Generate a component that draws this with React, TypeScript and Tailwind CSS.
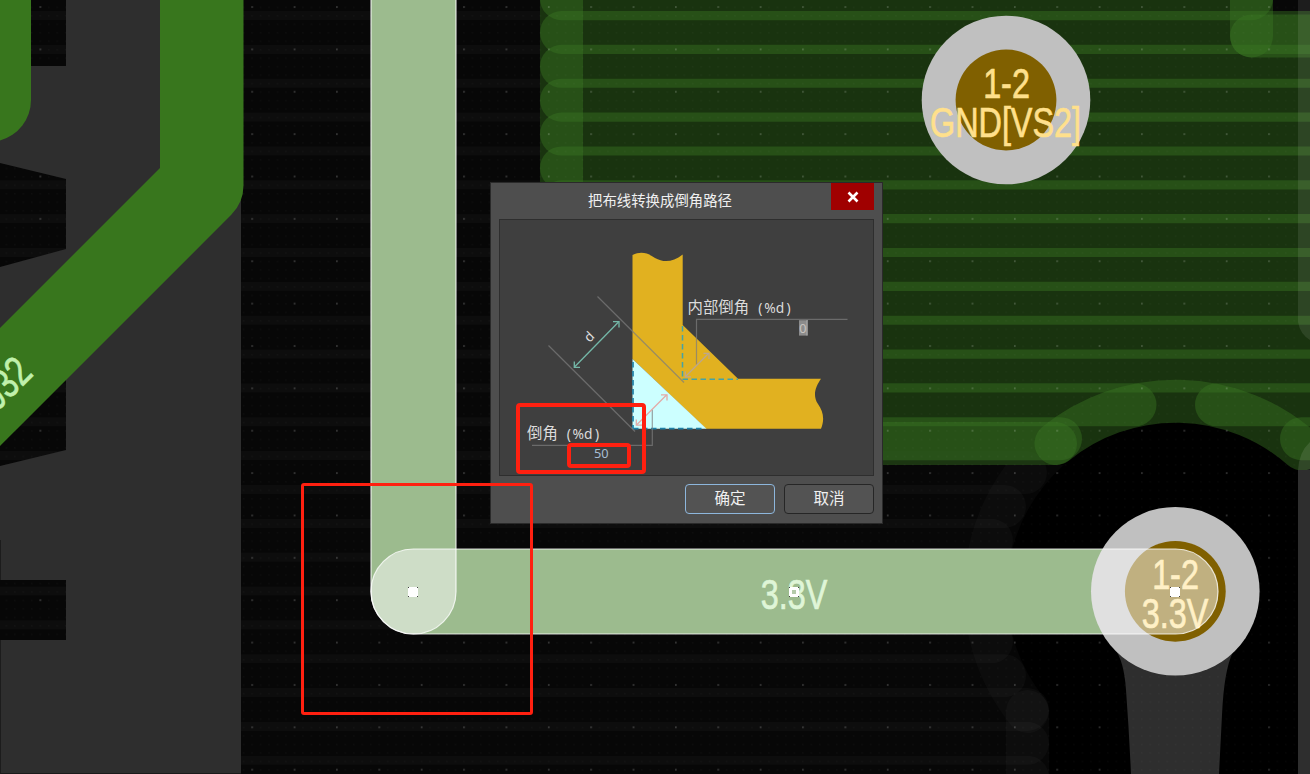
import React from 'react';

const PITCH = 33.85;
const rowTop = (k: number) => 11 + PITCH * k;

const COPPER = '#3b7623';

/* Filled pour rows: each row is a rounded 43px sweep overlapping the next one. */
const greenRows: { k: number; from: number; to: number }[] = [
  { k: -1, from: 540, to: 1273 },
  ...Array.from({ length: 11 }, (_, k) => ({ k, from: 540, to: 1340 })),
  { k: 11, from: 540, to: 1156.5 },
  { k: 11, from: 1195, to: 1340 },
  { k: 12, from: 540, to: 1082 },
  { k: 12, from: 1280, to: 1340 },
];

const darkEnds = [1047, 1026, 1013, 1009, 1009, 1013, 1026, 1049, 1049, 1049];

function PadText({ x, y, fill, children }: { x: number; y: number; fill: string; children: string }) {
  return (
    <text
      transform={`translate(${x} ${y}) scale(0.765 1)`}
      textAnchor="middle"
      fontSize="42.3"
      fill={fill}
      stroke={fill}
      strokeWidth="0.7"
    >
      {children}
    </text>
  );
}

function Handle({ x, y, hollow = false }: { x: number; y: number; hollow?: boolean }) {
  return (
    <g shapeRendering="crispEdges">
      <rect x={x - 5} y={y - 5} width="10" height="10" fill="#444" />
      <rect x={x - 4} y={y - 5} width="8" height="10" fill="#fff" />
      <rect x={x - 5} y={y - 4} width="10" height="8" fill="#fff" />
      {hollow && <rect x={x - 2} y={y - 2} width="4" height="4" fill="#b4cbaa" />}
    </g>
  );
}

function Board() {
  return (
    <svg
      className="block h-full w-full"
      viewBox="0 0 1310 774"
      fontFamily="'Liberation Sans', Arial, sans-serif"
    >
      <defs>
        <pattern id="minor" x="-2.9" y="-1.9" width="8.473" height="8.473" patternUnits="userSpaceOnUse">
          <rect x="0.3" y="0.3" width="1" height="1" fill="#fff" opacity="0.06" />
        </pattern>
        <pattern id="major" x="-2.9" y="6" width="42.37" height="42.37" patternUnits="userSpaceOnUse">
          <rect x="0" y="0.2" width="1.7" height="1.6" fill="#fff" opacity="0.2" />
        </pattern>
        <clipPath id="belowPour">
          <rect x="0" y="465" width="1175" height="309" />
        </clipPath>
      </defs>

      <rect width="1310" height="774" fill="#000" />

      {/* unrouted pour */}
      <g fill="#fff" fillOpacity="0.028">
        {Array.from({ length: 14 }, (_, i) => (
          <rect key={i} x="-30" y={rowTop(i - 1)} width="570" height="43" />
        ))}
        {darkEnds.map((end, i) => (
          <rect key={i} x="-30" y={rowTop(i + 13)} width={end + 30} height="43" rx="21.5" />
        ))}
        <rect x="1006" y="690" width="43" height="120" rx="21.5" />
        <rect x="1273" y="0" width="40" height="15" />
      </g>
      <path
        d="M1056 443.5 A191 191 0 0 0 1027.5 711.5"
        fill="none"
        stroke="#fff"
        strokeOpacity="0.025"
        strokeWidth="43"
        strokeLinecap="round"
        clipPath="url(#belowPour)"
      />

      {/* ground pour */}
      <g fill={COPPER} fillOpacity="0.43">
        {greenRows.map((r, i) => (
          <rect key={i} x={r.from} y={rowTop(r.k)} width={r.to - r.from} height="43" rx="21.5" />
        ))}
        <rect x="540" y="-30" width="43" height="495" />
        <rect x="583" y="422" width="494" height="43" rx="21.5" />
        <rect x="1230" y="-30" width="43" height="87.5" rx="21.5" />
        <rect x="1230" y="14.5" width="120" height="43" rx="21.5" />
      </g>
      <path
        d="M1056 443.5 A190.5 190.5 0 0 1 1302 449"
        fill="none"
        stroke={COPPER}
        strokeOpacity="0.43"
        strokeWidth="43"
        strokeLinecap="round"
      />

      {/* dark layer */}
      <path d="M1298 0 H1310 V340 Q1300 334 1298 322 Z" fill="#fff" fillOpacity="0.09" />
      <path d="M1298 470 Q1299 452 1310 442 V470 Z" fill="#fff" fillOpacity="0.1" />
      <rect x="1298" y="470" width="12" height="304" fill="#2e2e2e" />
      <path d="M1114 648 Q1124 660 1126 690 Q1129 730 1131 774 H1219 L1222 715 Q1224 670 1233 652 Z" fill="#2e2e2e" />
      <path
        fillRule="evenodd"
        fill="#2e2e2e"
        d="M0 0 H241 V774 H0 Z M31 0 V66 H66 V0 Z M0 163 L66 179 V249 L0 267 Z M0 370 H66 V450 L0 466 Z M0 580 H66 V640 H0 Z"
      />
      <path d="M0.5 540 V580 M0.5 640 V774" stroke="#1c1c1c" strokeWidth="1" />
      <path d="M0 773.5 H241" stroke="#1a1a1a" />

      {/* grid dots */}
      <path
        fill="url(#minor)"
        d="M241 0 H1298 V774 H241 Z M31 0 H66 V66 H31 Z M0 163 L66 179 V249 L0 267 Z M0 370 H66 V450 L0 466 Z M0 580 H66 V640 H0 Z"
      />
      <path
        fill="url(#major)"
        d="M241 0 H1125 V774 H241 Z M1125 0 H1298 V640 H1125 Z M1228 640 H1298 V774 H1228 Z M31 0 H66 V66 H31 Z M0 163 L66 179 V249 L0 267 Z M0 370 H66 V450 L0 466 Z M0 580 H66 V640 H0 Z"
      />

      {/* neighbouring traces */}
      <path
        d="M201.75 -50 V185.3 L-100 487"
        fill="none"
        stroke="#38761d"
        strokeWidth="83.5"
        strokeLinejoin="round"
      />
      <path d="M0 0 H31 V100 A42 42 0 0 1 0 140.5 Z" fill="#38761d" />
      <text
        transform="translate(34.5 374.5) rotate(-45) scale(0.765 1)"
        textAnchor="end"
        fontSize="42.3"
        fill="#c0f0ac"
        stroke="#c0f0ac"
        strokeWidth="0.7"
      >
        032
      </text>

      {/* 3.3V trace */}
      <path d="M413.5 -60 V591.5 H1175" fill="none" stroke="#38761d" strokeWidth="85" strokeLinejoin="round" />

      {/* vias */}
      <circle cx="1006" cy="100" r="84.3" fill="#c0c0c0" />
      <circle cx="1006" cy="100" r="50.4" fill="#806000" />
      <PadText x={1006.5} y={98} fill="#ffe08c">1-2</PadText>
      <PadText x={1005.5} y={136.5} fill="#ffe08c">GND[VS2]</PadText>

      <circle cx="1175.3" cy="591.3" r="84.3" fill="#c0c0c0" />
      <circle cx="1175.3" cy="591.3" r="50.4" fill="#806000" />
      <PadText x={1175.5} y={589.3} fill="#ffe08c">1-2</PadText>
      <PadText x={1175} y={627.5} fill="#ffe08c">3.3V</PadText>
      <PadText x={794} y={608.7} fill="#bfeaae">3.3V</PadText>

      {/* selection */}
      <g fill="#fff" fillOpacity="0.5" stroke="#fff" strokeOpacity="0.8" strokeWidth="1.2">
        <rect x="371" y="-60" width="85" height="694" rx="42.5" />
        <rect x="371" y="549" width="847" height="85" rx="42.5" />
      </g>
      <Handle x={413} y={592} />
      <Handle x={794} y={592} hollow />
      <Handle x={1175} y={592} />
    </svg>
  );
}

function ChamferDiagram() {
  return (
    <svg
      className="block h-full w-full"
      viewBox="500 220 373 255"
      fontFamily="'Noto Sans', 'Noto Sans CJK SC', sans-serif"
      fill="none"
    >
      <path
        d="M632.5 255 C641 251 648 253 655 258 C664 263 673 262 682.7 254.5 V325 L738 378.7 H821 C816 386 812 395 818 404 C823 411 825 419 821 428.7 H706 L632.5 359 Z"
        fill="#e1b120"
      />
      <path d="M632.5 359 V428.7 H706.5 Z" fill="#ccffff" />
      <g stroke="#1f80a6" strokeWidth="1.7" strokeDasharray="5.5 3.5">
        <path d="M633 362 V428.5" />
        <path d="M633 428.7 H705" />
      </g>
      <g stroke="#44a3a6" strokeWidth="1.5" strokeDasharray="5.5 3.5">
        <path d="M682.5 326 V379" />
        <path d="M682.5 379.3 H738" />
      </g>
      <g stroke="#7d7d7d" strokeOpacity="0.72" strokeWidth="1.2">
        <path d="M597.5 296.5 L684 382.5" />
        <path d="M548.5 345.5 L635 431.5" />
        <path d="M847.5 319.3 H696.5 V364.5" />
        <path d="M532 445.3 H652.3 V409.5" />
      </g>
      <g stroke="#74b8a8" strokeWidth="1.3">
        <path d="M574.5 367 L618.5 322" />
        <path d="M613 321.7 H619 V327.5 M574.3 361.5 V367.3 H580" />
      </g>
      <g stroke="#bca68f" strokeWidth="1.2">
        <path d="M685.5 376.5 L708.5 353.5" />
        <path d="M703.5 353.3 H709 V359 M685.3 371.5 V376.8 H691" />
      </g>
      <g stroke="#e3aaa6" strokeWidth="1.3">
        <path d="M636.5 425 L666.5 395" />
        <path d="M661 394.8 H667 V400.5 M636.3 419.5 V425.2 H642" />
      </g>
      <g fill="#dcdcdc">
        <text transform="translate(589.5 343) rotate(-45)" fontSize="13.5">d</text>
        <text x="687.5" y="312.8" fontSize="15.4" fontFamily="'Noto Sans CJK SC', sans-serif">内部倒角</text>
        <text y="312.5" fontSize="13.8"><tspan x="758.2">(</tspan><tspan x="764.2">%d</tspan><tspan x="786.6">)</tspan></text>
        <text x="527" y="438.8" fontSize="15.4" fontFamily="'Noto Sans CJK SC', sans-serif">倒角</text>
        <text y="438.5" fontSize="13.8"><tspan x="566.8">(</tspan><tspan x="572.6">%d</tspan><tspan x="595">)</tspan></text>
      </g>
      <rect x="799" y="320.2" width="8" height="15.4" fill="#8c8c8c" />
      <text x="799.3" y="332.6" fontSize="12.6" fill="#c9c4c0">0</text>
      <path d="M807.2 320 V335.6" stroke="#d0d0d0" strokeWidth="0.8" />
      <text x="594" y="458" fontSize="12.8" fill="#a6bdd2">50</text>
    </svg>
  );
}

function ChamferDialog() {
  return (
    <div
      role="dialog"
      className="absolute left-[490px] top-[182px] flex h-[342px] w-[393px] flex-col border border-[#2a2a2a] bg-[#4e4e4e] font-['Noto_Sans_CJK_SC',sans-serif]"
    >
      <header className="flex h-[36px] shrink-0 items-start pr-[8px]">
        <h1 className="flex-1 pr-[2px] pt-[6px] text-center text-[14.4px] leading-[22px] text-[#f0f0f0]">
          把布线转换成倒角路径
        </h1>
        <button className="flex h-[27px] w-[43px] items-center justify-center bg-[#a00000]" aria-label="close">
          <svg width="12" height="12" viewBox="0 0 12 12">
            <path d="M1.5 1.5 L10.5 10.5 M10.5 1.5 L1.5 10.5" stroke="#fff" strokeWidth="2.6" />
          </svg>
        </button>
      </header>
      <div className="mx-[8px] h-[257px] shrink-0 border border-[#2e2e2e] bg-[#3f3f3f]">
        <ChamferDiagram />
      </div>
      <footer className="flex justify-end gap-[9px] px-[8px] pt-[8px] text-[15.5px] leading-none text-[#f0f0f0]">
        <button className="flex h-[30px] w-[90px] items-center justify-center rounded-[4px] border border-[#8db6dc] bg-[#535353] pb-[2px]">
          确定
        </button>
        <button className="flex h-[30px] w-[90px] items-center justify-center rounded-[4px] border border-[#262626] bg-[#535353] pb-[2px]">
          取消
        </button>
      </footer>
    </div>
  );
}

export default function App() {
  return (
    <main className="relative h-[774px] w-[1310px] overflow-hidden bg-black">
      <Board />
      <ChamferDialog />
      <div className="absolute left-[301px] top-[483px] h-[232px] w-[232px] rounded-[3px] border-[3.5px] border-[#ff2010]" />
      <div className="absolute left-[516px] top-[403px] h-[71px] w-[130px] rounded-[4px] border-4 border-[#ff2010]" />
      <div className="absolute left-[567px] top-[443px] h-[25px] w-[64px] rounded-[4px] border-4 border-[#ff2010]" />
    </main>
  );
}
